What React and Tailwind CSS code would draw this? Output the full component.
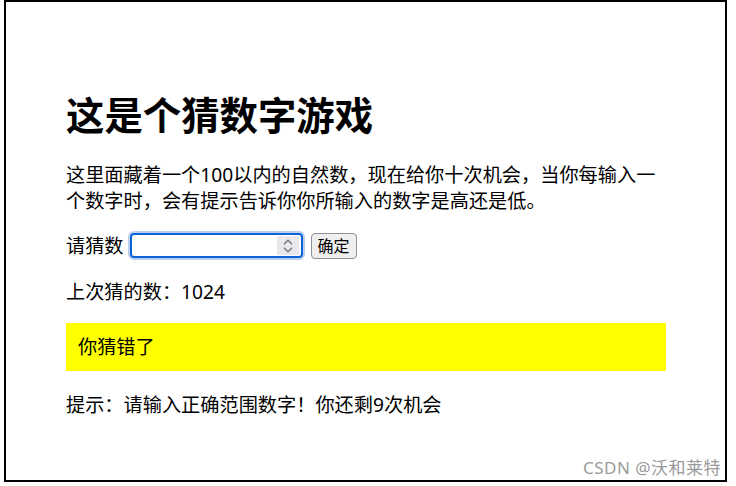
export default function App() {
  const font = { fontFamily: '"Noto Sans", "Noto Sans CJK SC", sans-serif' };

  return (
    <div className="w-[736px] h-[486px] bg-white relative" style={font}>
      <div className="ml-[4px] w-[723px] h-[482px] border-2 border-black pl-[60px] pt-[88px] text-black">
        <h1 className="text-[38.4px] font-bold leading-[50px]">这是个猜数字游戏</h1>

        <p className="mt-[22px] w-[600px] text-[19.2px] leading-[26px]">
          这里面藏着一个100以内的自然数，现在给你十次机会，当你每输入一个数字时，会有提示告诉你你所输入的数字是高还是低。
        </p>

        <div className="mt-[17px] h-[29px] flex items-center text-[19.2px]">
          <span className="leading-[26px]">请猜数</span>
          <div className="ml-[4px] w-[177px] h-[29px] rounded-[6px] border-2 border-[#bccff0]">
            <div className="h-full rounded-[4px] border-2 border-[#0b63d9] bg-white flex items-center justify-end pr-[2px]">
              <div className="w-[22px] h-[19px] bg-[#e9e9ed] flex flex-col items-center justify-center gap-[2px]">
                <svg width="10" height="6" viewBox="0 0 10 6">
                  <path d="M1 5.2 L5 1.2 L9 5.2" fill="none" stroke="#74747c" strokeWidth="1.3" />
                </svg>
                <svg width="10" height="6" viewBox="0 0 10 6">
                  <path d="M1 0.8 L5 4.8 L9 0.8" fill="none" stroke="#74747c" strokeWidth="1.3" />
                </svg>
              </div>
            </div>
          </div>
          <button className="ml-[6px] w-[46px] h-[26px] rounded-[4px] border border-[#8f8f9d] bg-[#efefef] text-[16px] leading-[20px] flex items-center justify-center">
            确定
          </button>
        </div>

        <p className="mt-[19px] text-[19.2px] leading-[26px]">上次猜的数：1024</p>

        <div className="mt-[18px] w-[600px] h-[48px] bg-[#ffff00] pl-[12px] flex items-center text-[19.2px]">
          你猜错了
        </div>

        <p className="mt-[21px] text-[19.2px] leading-[26px]">提示：请输入正确范围数字！你还剩9次机会</p>
      </div>

      <div className="absolute left-[583px] top-[456px] text-[17px] leading-[24px] tracking-[0.5px] text-[#9a9a9a]">
        CSDN @沃和莱特
      </div>
    </div>
  );
}
